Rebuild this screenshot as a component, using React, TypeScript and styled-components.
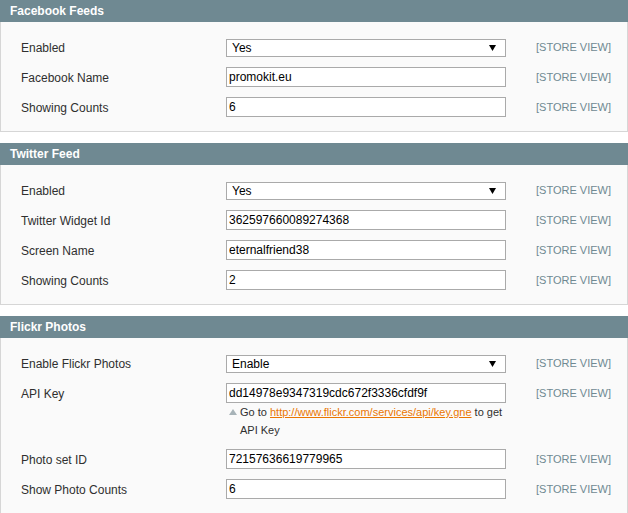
import React from "react";
import styled, { createGlobalStyle } from "styled-components";

const GlobalStyle = createGlobalStyle`
  html, body {
    margin: 0;
    padding: 0;
    background: #ffffff;
    font-family: "Liberation Sans", Arial, sans-serif;
    font-size: 12px;
    color: #2f2f2f;
  }
`;

const Page = styled.div`
  width: 628px;
  display: flex;
  flex-direction: column;
  gap: 11px;
`;

const Section = styled.section`
  display: flex;
  flex-direction: column;
`;

const Head = styled.div`
  height: 22px;
  background: #6f8992;
  padding: 0 10px;
  display: flex;
  align-items: center;
  box-sizing: border-box;
`;

const HeadTitle = styled.h4`
  margin: 0;
  color: #ffffff;
  font-size: 12px;
  font-weight: 700;
  line-height: 22px;
`;

const Fieldset = styled.div`
  background: #fafafa;
  border: 1px solid #d6d6d6;
  border-top: none;
  padding: 15px 0 14px 20px;
  display: flex;
  flex-direction: column;
  gap: 10px;
`;

const Row = styled.div`
  display: grid;
  grid-template-columns: 205px 280px auto;
  align-items: start;
`;

const Label = styled.label`
  height: 20px;
  line-height: 22px;
  color: #2f2f2f;
  font-size: 12px;
  white-space: nowrap;
`;

const Value = styled.div`
  display: flex;
  flex-direction: column;
`;

const TextInput = styled.input`
  box-sizing: border-box;
  width: 280px;
  height: 20px;
  border: 1px solid #aaaaaa;
  background: #ffffff;
  padding: 0 2px;
  margin: 0;
  font-family: "Liberation Sans", Arial, sans-serif;
  font-size: 12px;
  color: #000000;
  outline: none;
`;

const SelectWrap = styled.div`
  position: relative;
  margin-top: 2px;
  width: 280px;
  height: 18px;
`;

const Select = styled.select`
  appearance: none;
  -webkit-appearance: none;
  box-sizing: border-box;
  width: 280px;
  height: 18px;
  border: 1px solid #aaaaaa;
  border-radius: 0;
  background: #ffffff;
  padding: 0 0 0 5px;
  margin: 0;
  font-family: "Liberation Sans", Arial, sans-serif;
  font-size: 12px;
  color: #000000;
  outline: none;
`;

const Arrow = styled.svg`
  position: absolute;
  right: 10px;
  top: 6px;
  pointer-events: none;
`;

const Scope = styled.span`
  margin-left: 30px;
  height: 20px;
  line-height: 20px;
  font-size: 11px;
  color: #6f8992;
  white-space: nowrap;
`;

const Note = styled.p`
  margin: 0;
  padding-left: 14px;
  position: relative;
  font-size: 11px;
  line-height: 18px;
  color: #2f2f2f;
`;

const NoteMark = styled.svg`
  position: absolute;
  left: 3px;
  top: 6px;
`;

const NoteLink = styled.a`
  color: #ea7601;
  text-decoration: underline;
`;

type Field = {
  label: string;
  value: string;
  select?: boolean;
  note?: boolean;
};

const sections: { title: string; fields: Field[] }[] = [
  {
    title: "Facebook Feeds",
    fields: [
      { label: "Enabled", value: "Yes", select: true },
      { label: "Facebook Name", value: "promokit.eu" },
      { label: "Showing Counts", value: "6" },
    ],
  },
  {
    title: "Twitter Feed",
    fields: [
      { label: "Enabled", value: "Yes", select: true },
      { label: "Twitter Widget Id", value: "362597660089274368" },
      { label: "Screen Name", value: "eternalfriend38" },
      { label: "Showing Counts", value: "2" },
    ],
  },
  {
    title: "Flickr Photos",
    fields: [
      { label: "Enable Flickr Photos", value: "Enable", select: true },
      { label: "API Key", value: "dd14978e9347319cdc672f3336cfdf9f", note: true },
      { label: "Photo set ID", value: "72157636619779965" },
      { label: "Show Photo Counts", value: "6" },
    ],
  },
];

const FieldRow = ({ field }: { field: Field }) => (
  <Row>
    <Label>{field.label}</Label>
    <Value>
      {field.select ? (
        <SelectWrap>
          <Select defaultValue={field.value}>
            <option value={field.value}>{field.value}</option>
          </Select>
          <Arrow width="7" height="6" viewBox="0 0 7 6">
            <polygon points="0,0 7,0 3.5,6" fill="#000" />
          </Arrow>
        </SelectWrap>
      ) : (
        <TextInput defaultValue={field.value} />
      )}
      {field.note && (
        <Note>
          <NoteMark width="8" height="6" viewBox="0 0 8 6">
            <polygon points="4,0 8,6 0,6" fill="#a7b3b8" />
          </NoteMark>
          Go to{" "}
          <NoteLink href="#">http://www.flickr.com/services/api/key.gne</NoteLink>{" "}
          to get API Key
        </Note>
      )}
    </Value>
    <Scope>[STORE VIEW]</Scope>
  </Row>
);

export default function App() {
  return (
    <>
      <GlobalStyle />
      <Page>
        {sections.map((s) => (
          <Section key={s.title}>
            <Head>
              <HeadTitle>{s.title}</HeadTitle>
            </Head>
            <Fieldset>
              {s.fields.map((f) => (
                <FieldRow key={f.label} field={f} />
              ))}
            </Fieldset>
          </Section>
        ))}
      </Page>
    </>
  );
}
